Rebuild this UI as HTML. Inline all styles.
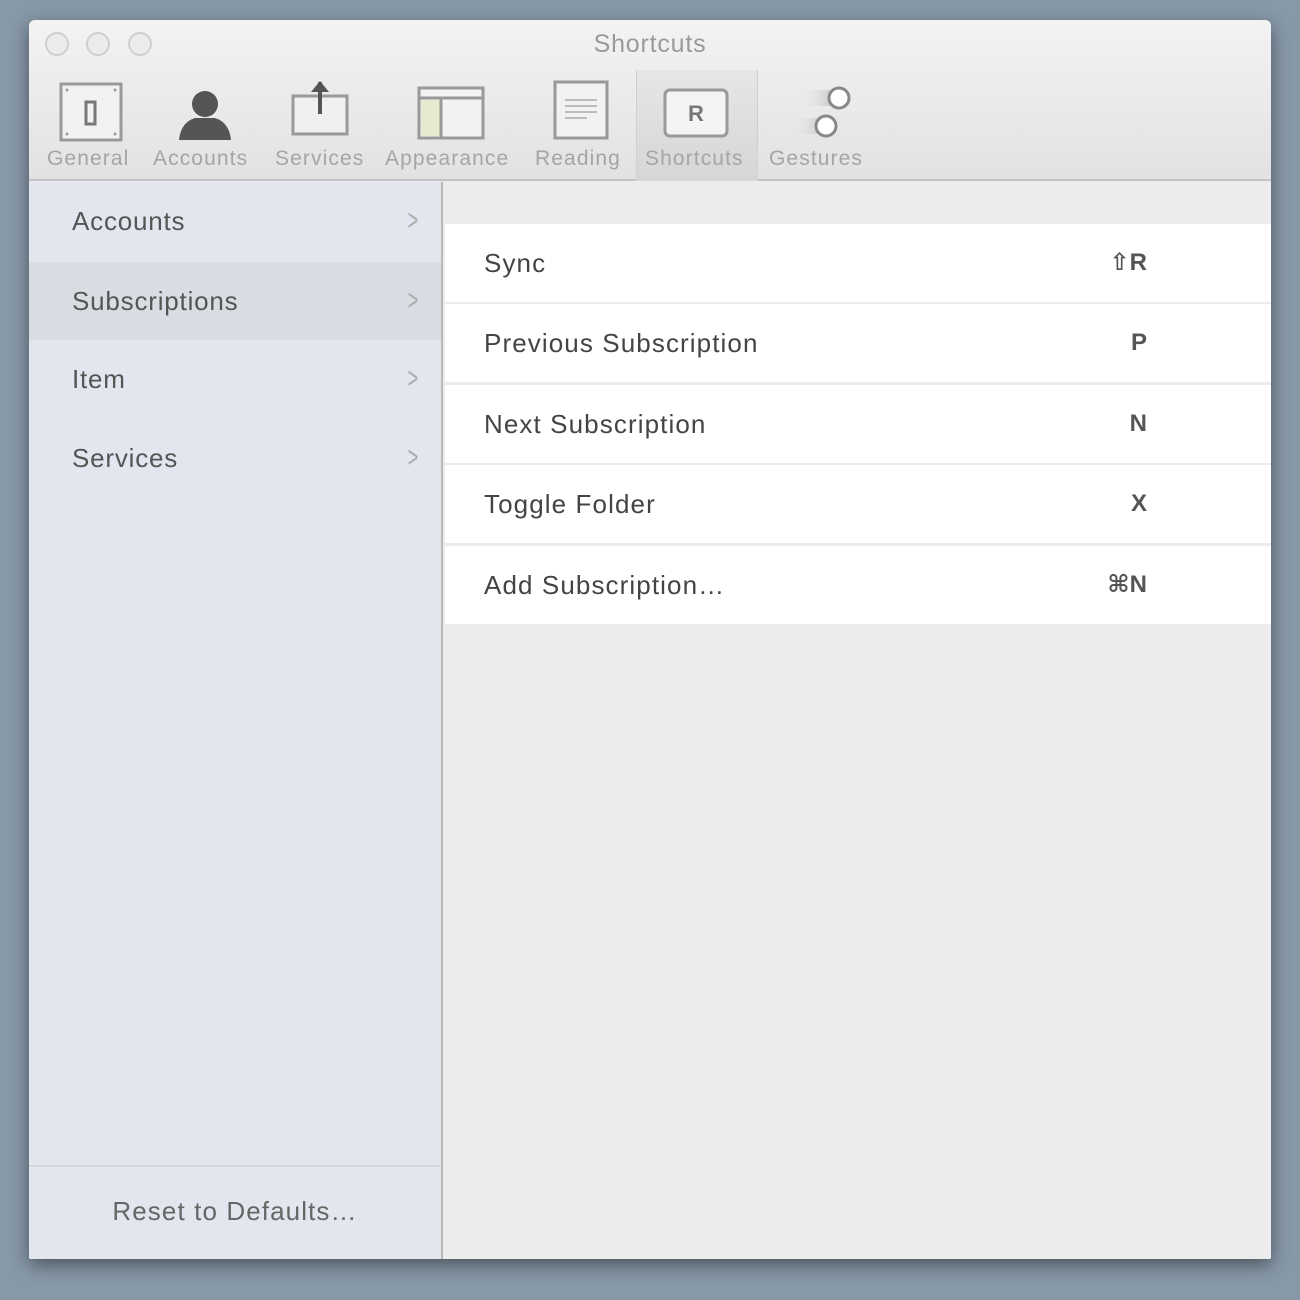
<!DOCTYPE html>
<html><head><meta charset="utf-8"><style>
*{margin:0;padding:0;box-sizing:border-box}
body{width:1300px;height:1300px;background:#8798a8;position:relative;overflow:hidden;font-family:"Liberation Sans","DejaVu Sans",sans-serif}
.win{position:absolute;left:29px;top:20px;width:1242px;height:1239px;background:#ececec;box-shadow:0 6px 18px rgba(0,0,0,.45);border-radius:6px 6px 2px 2px;overflow:hidden}
.tb{position:absolute;left:0;top:0;width:100%;height:161px;background:linear-gradient(#f3f3f3,#e2e2e2);border-bottom:2px solid #c4c4c4}
.dot{position:absolute;top:12px;width:24px;height:24px;border-radius:50%;border:2px solid #cfcfcf;background:#ececec}
.title{position:absolute;left:0;width:100%;top:10px;text-align:center;font-size:25px;color:#9a9a9a;letter-spacing:.8px}
.tool{position:absolute;top:127px;font-size:21px;color:#a5a5a5;white-space:nowrap;letter-spacing:1.1px}
.sel{position:absolute;left:607px;top:50px;width:122px;height:111px;background:linear-gradient(#e6e6e6,#d6d6d6);border-left:1px solid #d0d0d0;border-right:1px solid #d0d0d0}
svg{position:absolute}
.side{position:absolute;left:0;top:162px;width:414px;height:1077px;background:#e3e6ee;border-right:2px solid #b8b8b8}
.si{position:absolute;left:0;width:412px;height:78px;font-size:26px;color:#555;padding-left:43px;line-height:78px;letter-spacing:.8px}
.si b{font-weight:normal;position:absolute;right:19px;top:0;color:#aaa;font-size:30px;transform:scaleX(.6)}
.main{position:absolute;left:416px;top:162px;right:0;bottom:0;background:#ececec}
.row{position:absolute;left:0;right:0;height:78px;background:#fff;font-size:26px;color:#444;line-height:78px;padding-left:39px;letter-spacing:1.1px}
.row span{position:absolute;right:124px;top:0;font-weight:bold;color:#555;font-size:24px;letter-spacing:0}
</style></head><body>
<div class="win">
<div class="tb">
<div class="dot" style="left:16px"></div><div class="dot" style="left:57px"></div><div class="dot" style="left:99px"></div>
<div class="title">Shortcuts</div>
<div class="sel"></div>
<svg style="left:30px;top:62px" width="64" height="60"><rect x="2" y="2" width="60" height="56" fill="#f2f2f2" stroke="#999" stroke-width="3"/><circle cx="8" cy="8" r="1.5" fill="#999"/><circle cx="56" cy="8" r="1.5" fill="#999"/><circle cx="8" cy="52" r="1.5" fill="#999"/><circle cx="56" cy="52" r="1.5" fill="#999"/><rect x="27" y="20" width="9" height="22" fill="none" stroke="#777" stroke-width="3"/></svg>
<svg style="left:148px;top:66px" width="56" height="56"><circle cx="28" cy="18" r="13" fill="#555"/><path d="M2 54 Q4 36 18 32 L38 32 Q52 36 54 54 Z" fill="#555"/></svg>
<svg style="left:262px;top:58px" width="60" height="60"><rect x="2" y="18" width="54" height="38" fill="#f0f0f0" stroke="#999" stroke-width="3"/><path d="M29 4 V36" stroke="#555" stroke-width="4"/><path d="M20 14 L29 3 L38 14 Z" fill="#555"/></svg>
<svg style="left:388px;top:66px" width="70" height="54"><rect x="2" y="2" width="64" height="50" fill="#f2f2f2" stroke="#999" stroke-width="3"/><rect x="4" y="14" width="20" height="36" fill="#e8ead0"/><path d="M2 12 H66 M24 12 V52" stroke="#999" stroke-width="3"/></svg>
<svg style="left:524px;top:60px" width="58" height="60"><rect x="2" y="2" width="52" height="56" fill="#f2f2f2" stroke="#999" stroke-width="3"/><path d="M12 20H44M12 26H44M12 32H44M12 38H34" stroke="#bbb" stroke-width="2"/></svg>
<svg style="left:634px;top:68px" width="68" height="50"><rect x="2" y="2" width="62" height="46" rx="5" fill="#f4f4f4" stroke="#999" stroke-width="3"/><text x="33" y="33" text-anchor="middle" font-size="22" font-weight="bold" fill="#777" font-family="Liberation Sans">R</text></svg>
<svg style="left:760px;top:64px" width="66" height="60"><defs><linearGradient id="g" x1="0" x2="1"><stop offset="0" stop-color="#eee" stop-opacity="0"/><stop offset="1" stop-color="#bbb"/></linearGradient></defs><rect x="10" y="6" width="40" height="16" fill="url(#g)"/><rect x="2" y="34" width="36" height="16" fill="url(#g)"/><circle cx="50" cy="14" r="10" fill="#fff" stroke="#888" stroke-width="3"/><circle cx="37" cy="42" r="10" fill="#fff" stroke="#888" stroke-width="3"/></svg>
<div class="tool" style="left:18px">General</div>
<div class="tool" style="left:124px">Accounts</div>
<div class="tool" style="left:246px">Services</div>
<div class="tool" style="left:356px">Appearance</div>
<div class="tool" style="left:506px">Reading</div>
<div class="tool" style="left:616px">Shortcuts</div>
<div class="tool" style="left:740px">Gestures</div>
</div>
<div class="side">
<div class="si" style="top:0">Accounts<b>&gt;</b></div>
<div class="si" style="top:80px;background:#d9dce2">Subscriptions<b>&gt;</b></div>
<div class="si" style="top:158px">Item<b>&gt;</b></div>
<div class="si" style="top:237px">Services<b>&gt;</b></div>
<div style="position:absolute;left:0;width:412px;top:983px;border-top:2px solid #d5d8de"></div>
<div style="position:absolute;left:0;width:412px;top:1014px;text-align:center;font-size:26px;color:#666;letter-spacing:1.1px">Reset to Defaults…</div>
</div>
<div class="main">
<div class="row" style="top:42px">Sync<span>⇧R</span></div>
<div class="row" style="top:122px">Previous Subscription<span>P</span></div>
<div class="row" style="top:203px">Next Subscription<span>N</span></div>
<div class="row" style="top:283px">Toggle Folder<span>X</span></div>
<div class="row" style="top:364px">Add Subscription…<span>⌘N</span></div>
</div>
</div>
</body></html>
